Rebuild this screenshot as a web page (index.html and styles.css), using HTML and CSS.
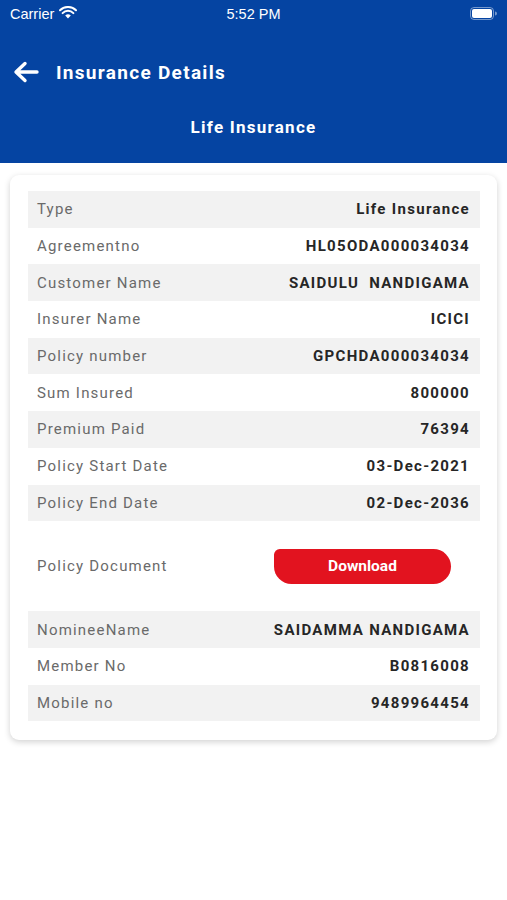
FILE: index.html
```html
<!DOCTYPE html>
<html>
<head>
<meta charset="utf-8">
<link rel="stylesheet" href="styles.css">
</head>
<body>
<header class="header">
  <div class="statusbar">
    <div class="sb-left">Carrier
      <svg class="wifi" width="18" height="13" viewBox="0 0 18 13"><path d="M9 12.5 L6.2 9.6 A4 4 0 0 1 11.8 9.6 Z" fill="#fff"/><path d="M3.6 7.1 A7.6 7.6 0 0 1 14.4 7.1" stroke="#fff" stroke-width="2" fill="none" stroke-linecap="round"/><path d="M1 4.3 A11.3 11.3 0 0 1 17 4.3" stroke="#fff" stroke-width="2" fill="none" stroke-linecap="round"/></svg>
    </div>
    <div class="sb-time">5:52 PM</div>
    <div class="sb-right">
      <svg width="27" height="13" viewBox="0 0 27 13"><rect x="0.5" y="0.5" width="23" height="12" rx="3.5" fill="none" stroke="rgba(255,255,255,0.45)"/><rect x="2" y="2" width="20" height="9" rx="2" fill="#fff"/><path d="M25 4.5 A2 2 0 0 1 25 8.5 Z" fill="rgba(255,255,255,0.45)"/></svg>
    </div>
  </div>
  <div class="nav">
    <svg class="back" width="26" height="22" viewBox="0 0 26 22"><path d="M24 11 H4 M12 2.5 L3 11 L12 19.5" stroke="#fff" stroke-width="3.4" fill="none" stroke-linecap="round" stroke-linejoin="round"/></svg>
    <h1 class="title">Insurance Details</h1>
  </div>
  <div class="subtitle">Life Insurance</div>
</header>
<main class="card">
  <div class="row shade"><span class="lbl">Type</span><span class="val">Life Insurance</span></div>
  <div class="row"><span class="lbl">Agreementno</span><span class="val">HL05ODA000034034</span></div>
  <div class="row shade"><span class="lbl">Customer Name</span><span class="val">SAIDULU&nbsp; NANDIGAMA</span></div>
  <div class="row"><span class="lbl">Insurer Name</span><span class="val">ICICI</span></div>
  <div class="row shade"><span class="lbl">Policy number</span><span class="val">GPCHDA000034034</span></div>
  <div class="row"><span class="lbl">Sum Insured</span><span class="val">800000</span></div>
  <div class="row shade"><span class="lbl">Premium Paid</span><span class="val">76394</span></div>
  <div class="row"><span class="lbl">Policy Start Date</span><span class="val">03-Dec-2021</span></div>
  <div class="row shade"><span class="lbl">Policy End Date</span><span class="val">02-Dec-2036</span></div>
  <div class="row doc"><span class="lbl">Policy Document</span><button class="dl">Download</button></div>
  <div class="row shade"><span class="lbl">NomineeName</span><span class="val">SAIDAMMA NANDIGAMA</span></div>
  <div class="row"><span class="lbl">Member No</span><span class="val">B0816008</span></div>
  <div class="row shade"><span class="lbl">Mobile no</span><span class="val">9489964454</span></div>
</main>
</body>
</html>
```
FILE: styles.css
```css
* { box-sizing: border-box; }
html, body { margin: 0; padding: 0; background: #fff; }
body { font-family: Roboto, "Noto Sans", sans-serif; width: 507px; height: 900px; overflow: hidden; }

.header { background: #0544a2; color: #fff; height: 163px; display: flex; flex-direction: column; }
.statusbar { height: 27px; display: flex; align-items: center; justify-content: space-between; padding: 0 10px 0 10px; position: relative; font-family: "Liberation Sans", Arial, sans-serif; font-size: 14.5px; }
.sb-left { display: flex; align-items: center; gap: 5px; }
.wifi { margin-top: -2px; }
.sb-time { position: absolute; left: 0; right: 0; text-align: center; font-size: 14.5px; }
.sb-right { display: flex; align-items: center; }
.nav { height: 90px; display: flex; align-items: center; padding-left: 13px; }
.back { margin-right: 17px; }
.title { margin: 0; font-size: 19px; font-weight: 700; letter-spacing: 1.3px; }
.subtitle { text-align: center; font-size: 17px; font-weight: 700; letter-spacing: 1.25px; line-height: 20px; }

.card { margin: 12px 10px 0 10px; border-radius: 9px; background: #fff; box-shadow: 0 2px 6px rgba(0,0,0,0.18); padding: 16px 17px 19px 18px; display: flex; flex-direction: column; }
.row { height: 36.7px; display: flex; align-items: center; justify-content: space-between; padding: 0 10px 0 9px; font-size: 15px; }
.shade { background: #f2f2f2; }
.lbl { color: #6a6a6a; letter-spacing: 1.2px; }
.val { color: #262626; font-weight: 700; letter-spacing: 1.3px; }
.doc { height: 90px; }
.dl { width: 177px; height: 35px; margin-right: 19px; border: 0; background: #e2131f; color: #fff; border-radius: 6px 18px 18px 18px; font-family: Roboto, sans-serif; font-size: 15.5px; font-weight: 700; padding: 0; }
```
